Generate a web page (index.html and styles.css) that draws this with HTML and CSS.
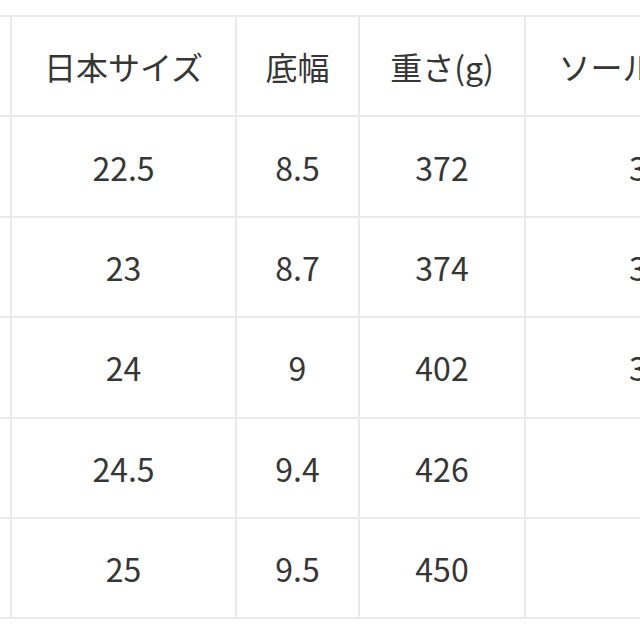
FILE: index.html
```html
<!DOCTYPE html>
<html lang="ja">
<head>
<meta charset="utf-8">
<link rel="stylesheet" href="styles.css">
</head>
<body>
<div class="viewport">
  <table class="size-table">
    <colgroup>
      <col class="c0"><col class="c1"><col class="c2"><col class="c3"><col class="c4">
    </colgroup>
    <thead>
      <tr><th>サイズ</th><th>日本サイズ</th><th>底幅</th><th>重さ(g)</th><th>ソール長 (cm)</th></tr>
    </thead>
    <tbody>
      <tr><td>S</td><td>22.5</td><td>8.5</td><td>372</td><td>30.5</td></tr>
      <tr><td>S</td><td>23</td><td>8.7</td><td>374</td><td>31.0</td></tr>
      <tr><td>M</td><td>24</td><td>9</td><td>402</td><td>31.5</td></tr>
      <tr><td>M</td><td>24.5</td><td>9.4</td><td>426</td><td>32</td></tr>
      <tr><td>L</td><td>25</td><td>9.5</td><td>450</td><td>33</td></tr>
    </tbody>
  </table>
</div>
</body>
</html>
```

FILE: styles.css
```css
html, body {
  margin: 0;
  padding: 0;
  background: #ffffff;
}

.viewport {
  width: 640px;
  height: 640px;
  overflow: hidden;
  padding-top: 15px;
  box-sizing: border-box;
}

.size-table {
  margin-left: -190px;
  border-collapse: collapse;
  table-layout: fixed;
  width: 974px;
  font-family: "Noto Sans CJK JP", "Noto Sans", sans-serif;
  font-size: 32px;
  color: #363636;
}

.c0 { width: 200px; }
.c1 { width: 225px; }
.c2 { width: 123px; }
.c3 { width: 166px; }
.c4 { width: 270px; }

.size-table th,
.size-table td {
  border: 2px solid #e9eaeb;
  height: 100.4px;
  padding: 0;
  text-align: center;
  vertical-align: middle;
  font-weight: 400;
  white-space: nowrap;
  box-sizing: border-box;
}
```
